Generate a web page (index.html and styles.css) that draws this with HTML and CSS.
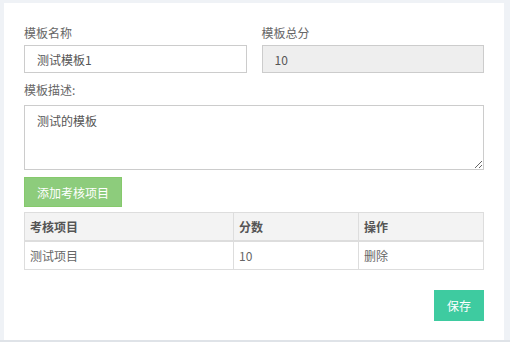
FILE: index.html
```html
<!DOCTYPE html>
<html>
<head>
    <meta charset="utf-8">
    <link rel="stylesheet" href="styles.css">
</head>
<body>
    <div class="panel">
        <div class="form-row">
            <div class="form-group">
                <label class="form-label">模板名称</label>
                <input type="text" class="form-input" value="测试模板1">
            </div>
            <div class="form-group">
                <label class="form-label">模板总分</label>
                <input type="text" class="form-input" value="10" disabled>
            </div>
        </div>
        <div class="form-group desc-group">
            <label class="form-label">模板描述:</label>
            <textarea class="form-textarea">测试的模板</textarea>
        </div>
        <button class="btn btn-add">添加考核项目</button>
        <table class="item-table">
            <thead>
                <tr>
                    <th class="col-name">考核项目</th>
                    <th class="col-score">分数</th>
                    <th>操作</th>
                </tr>
            </thead>
            <tbody>
                <tr>
                    <td>测试项目</td>
                    <td>10</td>
                    <td><a class="link-del">删除</a></td>
                </tr>
            </tbody>
        </table>
        <div class="actions">
            <button class="btn btn-save">保存</button>
        </div>
    </div>
</body>
</html>
```

FILE: styles.css
```css
html {
    background-color: #dfe3e8;
}
body {
    font-family: "Noto Sans CJK SC", "Liberation Sans", sans-serif;
    font-size: 12px;
    color: #666;
    background-color: #eff2f6;
    margin: 0;
    height: 340px;
    overflow: hidden;
    padding: 3px 6px 0 4px;
    box-sizing: border-box;
}
.panel {
    background-color: #fff;
    height: 337px;
    padding: 20px;
    box-sizing: border-box;
}
.form-row {
    display: flex;
    gap: 15px;
}
.form-row .form-group {
    flex: 1;
}
.form-group {
    margin-bottom: 7px;
}
.form-label {
    display: block;
    line-height: 20px;
    margin-bottom: 2px;
    color: #666;
}
.desc-group .form-label {
    margin-bottom: 5px;
}
.form-input {
    display: block;
    width: 100%;
    height: 28px;
    box-sizing: border-box;
    padding: 0 12px;
    border: 1px solid #ccc;
    border-radius: 0;
    font-family: inherit;
    font-size: 12px;
    color: #555;
    background-color: #fff;
    outline: none;
}
.form-input:disabled {
    background-color: #eee;
    color: #555;
}
.form-textarea {
    display: block;
    width: 100%;
    height: 65px;
    box-sizing: border-box;
    padding: 5px 12px;
    line-height: 20px;
    border: 1px solid #ccc;
    border-radius: 0;
    font-family: inherit;
    font-size: 12px;
    color: #555;
    outline: none;
    margin-bottom: 6px;
}
.btn {
    border: 1px solid transparent;
    border-radius: 0;
    font-family: inherit;
    font-size: 12px;
    color: #fff;
    cursor: pointer;
    padding: 0 12px;
}
.btn-add {
    display: block;
    height: 30px;
    background-color: #8dcc7c;
    border-color: #86c96c;
    margin-bottom: 5px;
}
.btn-save {
    height: 31px;
    padding: 0 12px;
    background-color: #3ecba0;
    border-color: #3ecba0;
}
.item-table {
    width: 100%;
    border-collapse: collapse;
    font-size: 12px;
}
.item-table th,
.item-table td {
    border: 1px solid #ddd;
    padding: 0 5px;
    height: 27px;
    text-align: left;
}
.item-table th {
    background-color: #f3f3f3;
    font-weight: bold;
    color: #555;
    border-bottom-width: 2px;
}
.item-table td {
    color: #666;
}
.col-name {
    width: 198px;
}
.col-score {
    width: 114px;
}
.link-del {
    color: #666;
    cursor: pointer;
}
.actions {
    display: flex;
    justify-content: flex-end;
    margin-top: 20px;
}
```
